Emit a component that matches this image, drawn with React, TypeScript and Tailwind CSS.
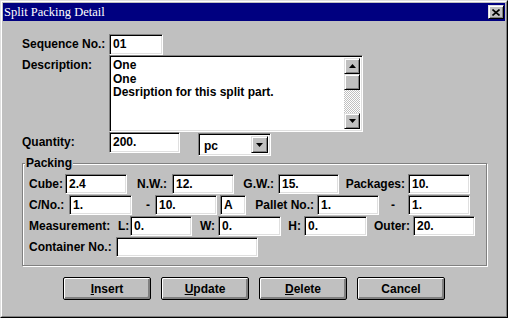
import React from "react";

const sunken =
  "bg-white border border-t-[#808080] border-l-[#808080] border-r-white border-b-white shadow-[inset_1px_1px_0_#000,inset_-1px_-1px_0_#dfdfdf]";
const raised =
  "bg-[#c0c0c0] border border-t-[#dfdfdf] border-l-[#dfdfdf] border-r-black border-b-black shadow-[inset_1px_1px_0_#fff,inset_-1px_-1px_0_#808080]";

function Down() {
  return (
    <svg width="7" height="4" viewBox="0 0 7 4">
      <path d="M0 0h7L3.5 4z" fill="#000" />
    </svg>
  );
}
function Up() {
  return (
    <svg width="7" height="4" viewBox="0 0 7 4">
      <path d="M0 4h7L3.5 0z" fill="#000" />
    </svg>
  );
}

function Box({ w, children }: { w: string; children?: React.ReactNode }) {
  return (
    <div className={`${sunken} ${w} h-[20px] pl-[3px] pt-[2px] leading-[14px] overflow-hidden whitespace-nowrap`}>
      {children}
    </div>
  );
}

function Btn({ children }: { children: React.ReactNode }) {
  return (
    <div className="w-[88px] h-[23px] bg-[#c0c0c0] border border-black rounded-[2px] shadow-[inset_1px_1px_0_#fff,inset_-1px_-1px_0_#808080,inset_-2px_-2px_0_#808080] flex items-center justify-center leading-[14px]">
      {children}
    </div>
  );
}

export default function App() {
  return (
    <div
      className="w-[508px] h-[318px] border border-t-[#dfdfdf] border-l-[#dfdfdf] border-r-black border-b-black text-[12px] font-bold text-black"
      style={{ fontFamily: '"Liberation Sans", Arial, sans-serif' }}
    >
      <div className="h-full border border-t-white border-l-white border-r-[#808080] border-b-[#808080] p-[1px] bg-[#c0c0c0] flex flex-col">
        {/* Title bar */}
        <div className="h-[18px] bg-[#000080] flex items-center justify-between shrink-0">
          <span
            className="pl-[1px] text-white text-[12.5px] font-normal leading-[18px]"
            style={{ fontFamily: '"Liberation Serif", "Times New Roman", serif' }}
          >
            Split Packing Detail
          </span>
          <div className={`${raised} w-[16px] h-[14px] mr-[1px] flex items-center justify-center`}>
            <svg width="8" height="7" viewBox="0 0 8 7">
              <path d="M0.5 0.5L7.5 6.5M7.5 0.5L0.5 6.5" stroke="#000" strokeWidth="1.6" />
            </svg>
          </div>
        </div>

        {/* Body */}
        <div className="flex flex-col pl-[19px]">
          <div className="flex mt-[13px]">
            <span className="w-[87px] leading-[21px]">Sequence No.:</span>
            <div className={`${sunken} w-[54px] h-[21px] pl-[3px] pt-[2px] leading-[14px]`}>01</div>
          </div>

          <div className="flex">
            <span className="w-[87px] leading-[20px]">Description:</span>
            <div className={`${sunken} w-[254px] h-[77px] flex p-[2px]`}>
              <div className="flex-1 pl-[1px] pt-[1px] leading-[13.5px]">
                <div>One</div>
                <div>One</div>
                <div>Desription for this split part.</div>
              </div>
              <div className="w-[16px] flex flex-col">
                <div className={`${raised} h-[16px] flex items-center justify-center`}>
                  <Up />
                </div>
                <div className={`${raised} h-[16px]`} />
                <div className="flex-1 bg-[repeating-conic-gradient(#fff_0_25%,#c0c0c0_0_50%)] bg-[length:2px_2px]" />
                <div className={`${raised} h-[16px] flex items-center justify-center`}>
                  <Down />
                </div>
              </div>
            </div>
          </div>

          <div className="flex">
            <span className="w-[87px] leading-[21px]">Quantity:</span>
            <div className={`${sunken} w-[71px] h-[21px] pl-[3px] pt-[2px] leading-[14px]`}>200.</div>
            <div className={`${sunken} ml-[18px] mt-[1px] w-[73px] h-[23px] flex p-[2px]`}>
              <span className="flex-1 pl-[3px] pt-[1px] leading-[19px]">pc</span>
              <div className={`${raised} w-[17px] flex items-center justify-center`}>
                <Down />
              </div>
            </div>
          </div>

          {/* Packing group */}
          <div className="relative mt-[7px] w-[465px] h-[103px] border border-[#808080] shadow-[inset_1px_1px_0_#fff,1px_1px_0_#fff] flex flex-col gap-[1px] pt-[10px]">
            <span className="absolute left-[2px] top-[-8px] px-[1px] bg-[#c0c0c0] leading-[14px]">Packing</span>

            <div className="flex h-[20px] leading-[20px]">
              <span className="w-[42px] pl-[6px]">Cube:</span>
              <Box w="w-[62px]">2.4</Box>
              <span className="w-[45px] text-right pr-[5px]">N.W.:</span>
              <Box w="w-[62px]">12.</Box>
              <span className="w-[44px] text-right pr-[4px]">G.W.:</span>
              <Box w="w-[61px]">15.</Box>
              <span className="w-[69px] text-right pr-[3px]">Packages:</span>
              <Box w="w-[62px]">10.</Box>
            </div>

            <div className="flex h-[20px] leading-[20px]">
              <span className="w-[46px] pl-[6px]">C/No.:</span>
              <Box w="w-[63px]">1.</Box>
              <span className="w-[23px] text-right pr-[5px]">-</span>
              <Box w="w-[62px]">10.</Box>
              <div className="w-[3px]" />
              <Box w="w-[26px]">A</Box>
              <span className="w-[71px] text-right pr-[3px]">Pallet No.:</span>
              <Box w="w-[62px]">1.</Box>
              <span className="w-[29px] text-right pr-[13px]">-</span>
              <Box w="w-[62px]">1.</Box>
            </div>

            <div className="flex h-[20px] leading-[20px]">
              <span className="w-[95px] pl-[6px]">Measurement:</span>
              <span className="w-[12px]">L:</span>
              <Box w="w-[62px]">0.</Box>
              <span className="w-[26px] text-right pr-[3px]">W:</span>
              <Box w="w-[63px]">0.</Box>
              <span className="w-[23px] text-right pr-[3px]">H:</span>
              <Box w="w-[63px]">0.</Box>
              <span className="w-[46px] text-right pr-[3px]">Outer:</span>
              <Box w="w-[62px]">20.</Box>
            </div>

            <div className="flex h-[20px] leading-[20px]">
              <span className="w-[93px] pl-[6px]">Container No.:</span>
              <Box w="w-[142px]" />
            </div>
          </div>

          {/* Buttons */}
          <div className="flex gap-[10px] mt-[11px] ml-[41px]">
            <Btn>
              <span>
                <u>I</u>nsert
              </span>
            </Btn>
            <Btn>
              <span>
                <u>U</u>pdate
              </span>
            </Btn>
            <Btn>
              <span>
                <u>D</u>elete
              </span>
            </Btn>
            <Btn>
              <span>Cancel</span>
            </Btn>
          </div>
        </div>
      </div>
    </div>
  );
}
